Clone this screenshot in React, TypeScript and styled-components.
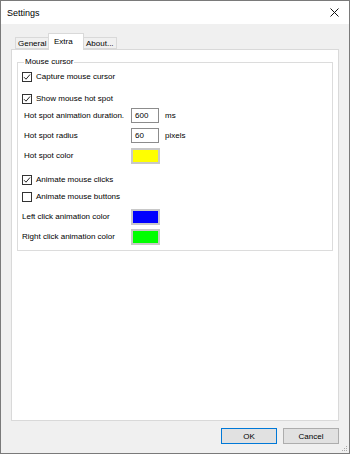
import React from 'react'
import styled, { createGlobalStyle } from 'styled-components'

const GlobalStyle = createGlobalStyle`
    html, body {
        margin: 0;
        padding: 0;
        background: #f0f0f0;
    }
    body {
        font-family: 'Liberation Sans', Arial, sans-serif;
        font-size: 8px;
        color: #000;
    }
`

type RowProps = { $top: number; $indent?: number }
type SwatchProps = { $color: string }
type ButtonProps = { $default?: boolean }
type TabProps = { $active?: boolean; $width: number }

const CheckIcon = () => (
    <svg width="8" height="8" viewBox="0 0 8 8">
        <path d="M1 4.2 L3 6.2 L7 1.5" fill="none" stroke="#222" strokeWidth="1" />
    </svg>
)

const CloseIcon = () => (
    <svg width="9" height="9" viewBox="0 0 9 9">
        <path d="M0.5 0.5 L8.5 8.5 M8.5 0.5 L0.5 8.5" stroke="#111" strokeWidth="1" />
    </svg>
)

const Checkbox: React.FC<{ checked?: boolean; label: string; top: number }> = ({ checked, label, top }) => (
    <Row $top={top} $indent={4}>
        <Box>{checked && <CheckIcon />}</Box>
        <CheckLabel>{label}</CheckLabel>
    </Row>
)

const Field: React.FC<{ label: string; value: string; unit: string; top: number }> = ({ label, value, unit, top }) => (
    <Row $top={top} $indent={6}>
        <FieldLabel $width={107}>{label}</FieldLabel>
        <Input>{value}</Input>
        <Unit>{unit}</Unit>
    </Row>
)

const ColorField: React.FC<{ label: string; color: string; top: number; indent: number }> = ({ label, color, top, indent }) => (
    <Row $top={top} $indent={indent}>
        <FieldLabel $width={113 - indent}>{label}</FieldLabel>
        <Swatch $color={color} />
    </Row>
)

export default function App() {
    return (
        <>
            <GlobalStyle />
            <Window>
                <TitleBar>
                    <Title>Settings</Title>
                    <Close><CloseIcon /></Close>
                </TitleBar>
                <Body>
                    <Tabs>
                        <Tab $width={34}>General</Tab>
                        <Tab $width={36} $active>Extra</Tab>
                        <Tab $width={34}>About...</Tab>
                    </Tabs>
                    <Panel>
                        <Group>
                            <Legend>Mouse cursor</Legend>
                            <Checkbox checked label="Capture mouse cursor" top={0} />
                            <Checkbox checked label="Show mouse hot spot" top={7} />
                            <Field label="Hot spot animation duration." value="600" unit="ms" top={2} />
                            <Field label="Hot spot radius" value="60" unit="pixels" top={5} />
                            <ColorField label="Hot spot color" color="#ffff00" top={5} indent={6} />
                            <Checkbox checked label="Animate mouse clicks" top={9} />
                            <Checkbox label="Animate mouse buttons" top={2} />
                            <ColorField label="Left click animation color" color="#0000ff" top={5} indent={4} />
                            <ColorField label="Right click animation color" color="#00ff00" top={5} indent={4} />
                        </Group>
                    </Panel>
                    <Footer>
                        <Button $default>OK</Button>
                        <Button>Cancel</Button>
                    </Footer>
                </Body>
                <Grip>
                    <svg width="6" height="6" viewBox="0 0 6 6">
                        <rect x="4" y="0" width="1" height="1" fill="#aaa" />
                        <rect x="2" y="2" width="1" height="1" fill="#aaa" />
                        <rect x="4" y="2" width="1" height="1" fill="#aaa" />
                        <rect x="0" y="4" width="1" height="1" fill="#aaa" />
                        <rect x="2" y="4" width="1" height="1" fill="#aaa" />
                        <rect x="4" y="4" width="1" height="1" fill="#aaa" />
                    </svg>
                </Grip>
            </Window>
        </>
    )
}

const Window = styled.div`
    position: relative;
    box-sizing: border-box;
    width: 350px;
    height: 454px;
    border: 1px solid #7a7a7a;
    background: #f0f0f0;
    display: flex;
    flex-direction: column;
`

const TitleBar = styled.div`
    height: 23px;
    background: #fff;
    display: flex;
    align-items: center;
    justify-content: space-between;
    padding: 0 8px 0 6px;
`

const Title = styled.div`
    font-size: 9px;
    color: #000;
`

const Close = styled.div`
    display: flex;
    align-items: center;
    margin-right: 2px;
`

const Body = styled.div`
    flex: 1;
    display: flex;
    flex-direction: column;
    padding: 9px 10px 0 10px;
`

const Tabs = styled.div`
    display: flex;
    align-items: flex-end;
    height: 16px;
    padding-left: 4px;
    position: relative;
    z-index: 1;
`

const Tab = styled.div<TabProps>`
    box-sizing: border-box;
    width: ${p => p.$width}px;
    height: ${p => (p.$active ? 17 : 12)}px;
    margin-bottom: ${p => (p.$active ? -1 : 0)}px;
    border: 1px solid #d9d9d9;
    border-bottom: ${p => (p.$active ? 'none' : '1px solid #d9d9d9')};
    background: ${p => (p.$active ? '#fff' : '#f0f0f0')};
    padding: ${p => (p.$active ? '3px 0 0 5px' : '1px 0 0 2px')};
    margin-left: ${p => (p.$active ? -1 : 0)}px;
    margin-right: ${p => (p.$active ? -1 : 0)}px;
    z-index: ${p => (p.$active ? 2 : 1)};
    font-size: 8px;
    line-height: 9px;
    white-space: nowrap;
`

const Panel = styled.div`
    box-sizing: border-box;
    width: 328px;
    height: 372px;
    background: #fff;
    border: 1px solid #d9d9d9;
    padding: 12px 5px 0 5px;
`

const Group = styled.div`
    position: relative;
    box-sizing: border-box;
    height: 189px;
    border: 1px solid #dcdcdc;
    display: flex;
    flex-direction: column;
    padding-top: 6px;
`

const Legend = styled.div`
    position: absolute;
    top: -6px;
    left: 6px;
    background: #fff;
    padding: 0 1px;
    line-height: 10px;
    color: #000;
`

const Row = styled.div<RowProps>`
    display: flex;
    align-items: center;
    height: 15px;
    margin-top: ${p => p.$top}px;
    padding-left: ${p => p.$indent ?? 0}px;
`

const Box = styled.div`
    box-sizing: border-box;
    width: 10px;
    height: 10px;
    border: 1px solid #333;
    background: #fff;
    display: flex;
    align-items: center;
    justify-content: center;
`

const CheckLabel = styled.span`
    margin-left: 4px;
`

const FieldLabel = styled.span<{ $width: number }>`
    width: ${p => p.$width}px;
    white-space: nowrap;
    overflow: hidden;
`

const Input = styled.div`
    box-sizing: border-box;
    width: 28px;
    height: 15px;
    border: 1px solid #8c8c8c;
    background: #fff;
    padding: 2px 0 0 3px;
    line-height: 10px;
`

const Unit = styled.span`
    margin-left: 6px;
`

const Swatch = styled.div<SwatchProps>`
    box-sizing: border-box;
    width: 29px;
    height: 16px;
    border: 2px solid #c8c8c8;
    background: ${p => p.$color};
`

const Footer = styled.div`
    display: flex;
    justify-content: flex-end;
    gap: 6px;
    padding: 7px 0 0 0;
`

const Button = styled.div<ButtonProps>`
    box-sizing: border-box;
    width: 56px;
    height: 16px;
    background: #e1e1e1;
    border: 1px solid ${p => (p.$default ? '#0078d7' : '#adadad')};
    display: flex;
    align-items: center;
    justify-content: center;
    font-size: 8px;
`

const Grip = styled.div`
    position: absolute;
    right: 1px;
    bottom: 1px;
    line-height: 0;
`
